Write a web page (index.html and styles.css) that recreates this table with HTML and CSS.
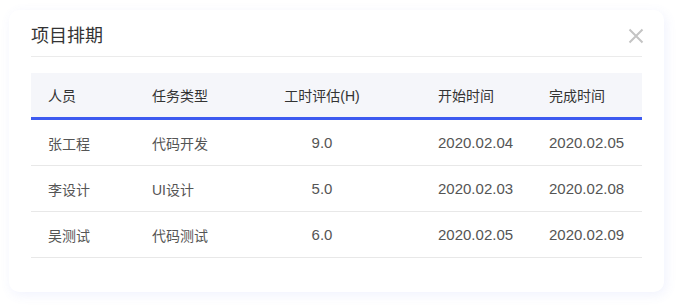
FILE: index.html
```html
<!DOCTYPE html>
<html lang="zh">
<head>
<meta charset="utf-8">
<link rel="stylesheet" href="styles.css">
</head>
<body>
<div class="card">
  <div class="card-head">
    <h1 class="title">项目排期</h1>
    <button class="close" aria-label="关闭">
      <svg width="16" height="16" viewBox="0 0 16 16"><path d="M1.5 1.5 L14.5 14.5 M14.5 1.5 L1.5 14.5" stroke="#c4c4c4" stroke-width="2" fill="none"/></svg>
    </button>
  </div>
  <div class="table">
    <div class="row head">
      <div class="cell">人员</div>
      <div class="cell">任务类型</div>
      <div class="cell center">工时评估(H)</div>
      <div class="cell">开始时间</div>
      <div class="cell">完成时间</div>
    </div>
    <div class="row">
      <div class="cell">张工程</div>
      <div class="cell">代码开发</div>
      <div class="cell center num">9.0</div>
      <div class="cell num">2020.02.04</div>
      <div class="cell num">2020.02.05</div>
    </div>
    <div class="row">
      <div class="cell">李设计</div>
      <div class="cell">UI设计</div>
      <div class="cell center num">5.0</div>
      <div class="cell num">2020.02.03</div>
      <div class="cell num">2020.02.08</div>
    </div>
    <div class="row">
      <div class="cell">吴测试</div>
      <div class="cell">代码测试</div>
      <div class="cell center num">6.0</div>
      <div class="cell num">2020.02.05</div>
      <div class="cell num">2020.02.09</div>
    </div>
  </div>
</div>
</body>
</html>
```
FILE: styles.css
```css
html, body {
  margin: 0;
  padding: 0;
  background: #ffffff;
}
body {
  font-family: "Liberation Sans", "Noto Sans CJK SC", sans-serif;
  color: #333;
  padding: 10px 16px 16px 9px;
}
.card {
  width: 655px;
  height: 282px;
  box-sizing: border-box;
  background: #fff;
  border-radius: 10px;
  box-shadow: 2px 3px 12px rgba(90, 110, 230, 0.09);
  padding: 0 22px 0 22px;
}
.card-head {
  display: flex;
  align-items: center;
  justify-content: space-between;
  height: 46px;
  border-bottom: 1px solid #ebebeb;
}
.title {
  margin: 0;
  font-size: 18px;
  font-weight: 400;
  color: #333;
  line-height: 24px;
  padding-top: 6px;
}
.close {
  border: 0;
  background: none;
  padding: 0;
  margin: 6px -2px 0 0;
  width: 16px;
  height: 16px;
  display: block;
}
.close svg { display: block; }
.table {
  margin-top: 16px;
}
.row {
  display: grid;
  grid-template-columns: 104px 88px 198px 111px 110px;
  height: 46px;
  border-bottom: 1px solid #e8e8e8;
  box-sizing: border-box;
  align-items: center;
  font-size: 14px;
  color: #555;
}
.row.head {
  height: 47px;
  background: #f5f6fa;
  border-bottom: 3px solid #3d5af0;
  color: #333;
}
.cell {
  padding-left: 17px;
  white-space: nowrap;
}
.cell.num {
  font-size: 15px;
}
.cell.center {
  padding-left: 0;
  text-align: center;
}
```
